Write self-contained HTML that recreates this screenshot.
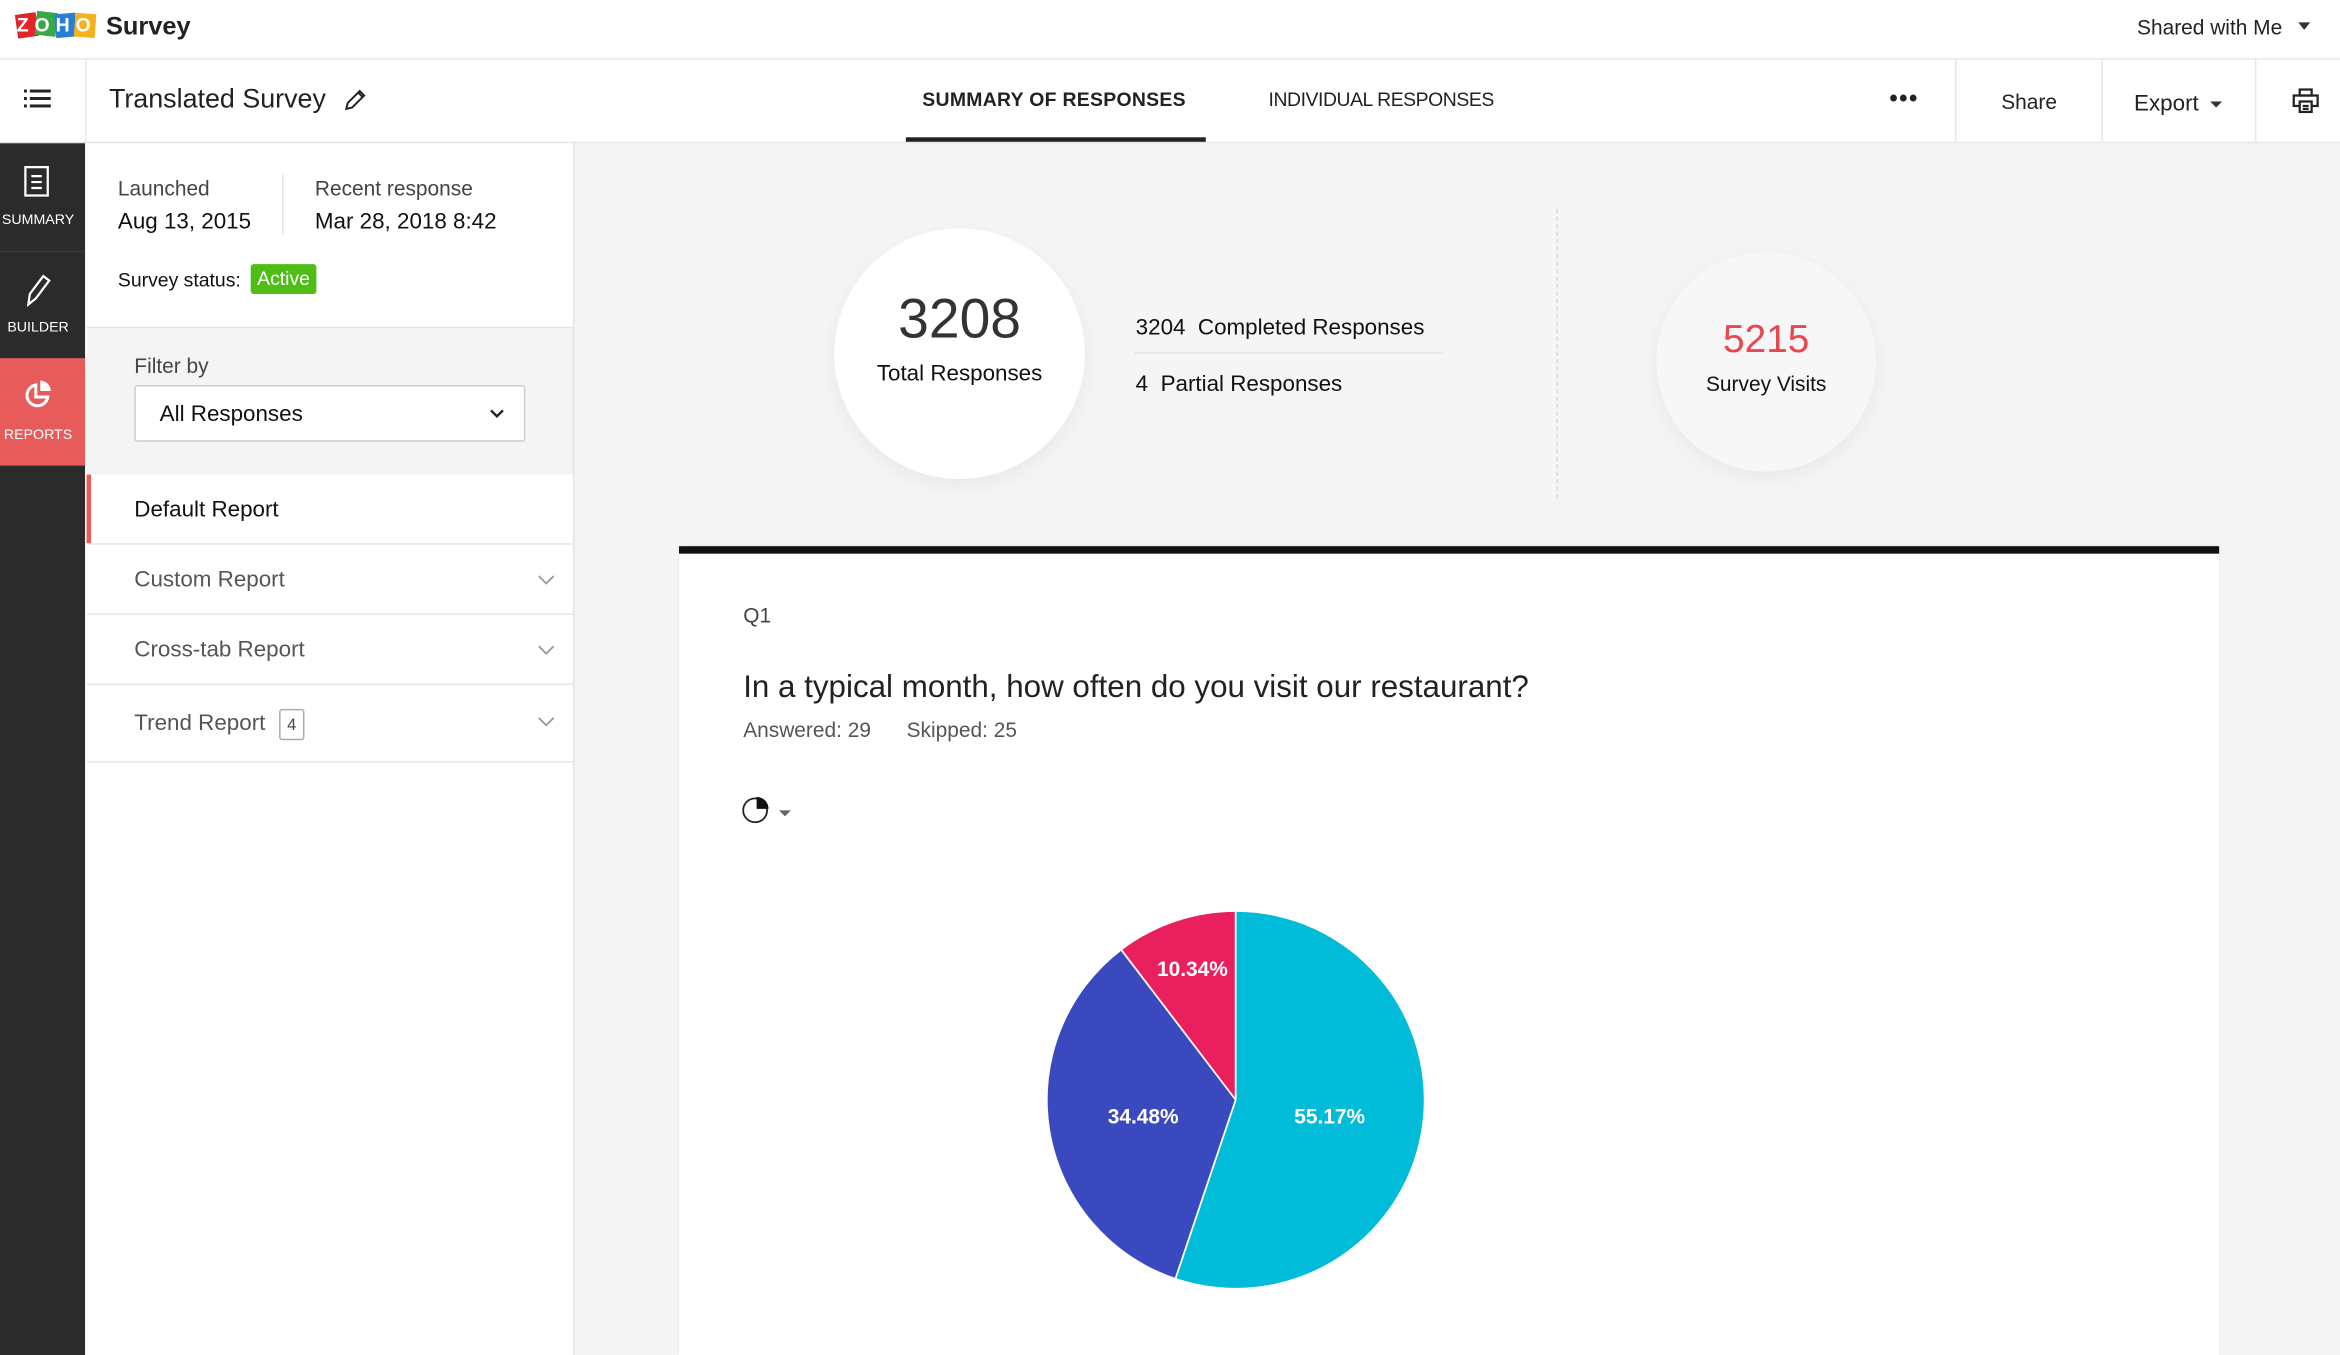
<!DOCTYPE html>
<html><head><meta charset="utf-8"><style>
*{box-sizing:border-box;margin:0;padding:0}
html,body{width:2340px;height:1355px;overflow:hidden;background:#fff}
#w{width:1568px;height:908px;transform:scale(1.49235);transform-origin:0 0;position:relative;font-family:"Liberation Sans",sans-serif;color:#222}
.a{position:absolute}
.t{white-space:nowrap}
</style></head><body><div id="w">
<div class="a" style="left:0;top:0;width:1568px;height:40px;background:#fff;border-bottom:1px solid #e6e6e6"></div>
<div class="a" style="left:11px;top:9px;width:14px;height:16px;background:#e42527;transform:rotate(-8deg)"></div>
<div class="a" style="left:24px;top:8px;width:14px;height:16px;background:#3aa844;transform:rotate(6deg)"></div>
<div class="a" style="left:37px;top:9px;width:14px;height:16px;background:#2a7fd4;transform:rotate(-5deg)"></div>
<div class="a" style="left:50px;top:9px;width:14px;height:16px;background:#f6b21a;transform:rotate(4deg)"></div>
<div class="a t" style="left:11px;top:9px;width:54px;font:bold 13px 'Liberation Sans';color:#fff;letter-spacing:4px;text-align:center;line-height:16px">ZOHO</div>
<div class="a t" style="left:71px;top:8px;font:bold 17px 'Liberation Sans';color:#222">Survey</div>
<div class="a t" style="left:1432px;top:10px;font-size:14px;color:#222">Shared with Me</div>
<div class="a" style="left:1540px;top:15px;border:4px solid transparent;border-top:5px solid #333"></div>
<div class="a" style="left:0;top:40px;width:1568px;height:56px;background:#fff;border-bottom:1px solid #e3e3e3"></div>
<div class="a" style="left:57px;top:40px;width:1px;height:56px;background:#e6e6e6"></div>
<svg class="a" style="left:16px;top:59px" width="20" height="16"><g fill="#222"><rect x="0" y="1" width="2" height="2"/><rect x="4" y="1" width="14" height="2"/><rect x="0" y="6" width="2" height="2"/><rect x="4" y="6" width="14" height="2"/><rect x="0" y="11" width="2" height="2"/><rect x="4" y="11" width="14" height="2"/></g></svg>
<div class="a t" style="left:73px;top:56px;font-size:18px;color:#222">Translated Survey</div>
<svg class="a" style="left:230px;top:59px" width="16" height="16"><path d="M2 14 L3 10 L11 2 L14 5 L6 13 Z M10 3 L13 6" fill="none" stroke="#222" stroke-width="1.3"/></svg>
<div class="a t" style="left:618px;top:59px;font:bold 13px 'Liberation Sans';color:#222;letter-spacing:0.2px">SUMMARY OF RESPONSES</div>
<div class="a" style="left:607px;top:92px;width:201px;height:3px;background:#222"></div>
<div class="a t" style="left:850px;top:59px;font-size:13px;color:#222;letter-spacing:-0.3px">INDIVIDUAL RESPONSES</div>
<div class="a t" style="left:1266px;top:58px;font:bold 16px 'Liberation Sans';letter-spacing:1px">•••</div>
<div class="a" style="left:1310px;top:40px;width:1px;height:56px;background:#e6e6e6"></div>
<div class="a t" style="left:1341px;top:60px;font-size:14px">Share</div>
<div class="a" style="left:1408px;top:40px;width:1px;height:56px;background:#e6e6e6"></div>
<div class="a t" style="left:1430px;top:61px;font-size:15px">Export</div>
<div class="a" style="left:1481px;top:68px;border:4px solid transparent;border-top:4px solid #333"></div>
<div class="a" style="left:1511px;top:40px;width:1px;height:56px;background:#e6e6e6"></div>
<svg class="a" style="left:1536px;top:59px" width="18" height="18"><g fill="none" stroke="#222" stroke-width="1.5"><rect x="5" y="1" width="8" height="4"/><rect x="1" y="5" width="16" height="7"/><rect x="5" y="9" width="8" height="7" fill="#fff"/><path d="M7 12h4M7 14h4"/></g></svg>
<div class="a" style="left:0;top:96px;width:57px;height:812px;background:#2b2b2b"></div>
<div class="a" style="left:0;top:168px;width:57px;height:1px;background:#3a3a3a"></div>
<svg class="a" style="left:16px;top:111px" width="18" height="22"><rect x="1" y="1" width="15" height="19" fill="none" stroke="#fff" stroke-width="1.5"/><path d="M5 7h7M5 11h7M5 15h7" stroke="#fff" stroke-width="1.5"/></svg>
<div class="a t" style="left:0;top:142px;width:51px;text-align:center;font-size:9.5px;color:#fff">SUMMARY</div>
<svg class="a" style="left:16px;top:182px" width="20" height="24"><path d="M3 22 L4 15 L13 3 L17 6 L8 18 Z" fill="none" stroke="#fff" stroke-width="1.5"/></svg>
<div class="a t" style="left:0;top:214px;width:51px;text-align:center;font-size:9.5px;color:#fff">BUILDER</div>
<div class="a" style="left:0;top:240px;width:57px;height:72px;background:#e85b5b"></div>
<svg class="a" style="left:16px;top:254px" width="20" height="20"><path d="M8 4 A7 7 0 1 0 16 12 L8 12 Z" fill="none" stroke="#fff" stroke-width="2"/><path d="M11 1 A7 7 0 0 1 18 8 L11 8 Z" fill="#fff"/></svg>
<div class="a t" style="left:0;top:286px;width:51px;text-align:center;font-size:9.5px;color:#fff">REPORTS</div>
<div class="a" style="left:58px;top:96px;width:326px;height:124px;background:#fff;border-bottom:1px solid #e2e2e2"></div>
<div class="a" style="left:58px;top:220px;width:326px;height:98px;background:#f4f4f4"></div>
<div class="a" style="left:58px;top:318px;width:326px;height:590px;background:#fff"></div>
<div class="a" style="left:384px;top:96px;width:1px;height:812px;background:#e2e2e2"></div>
<div class="a t" style="left:79px;top:118px;font-size:14px;color:#444">Launched</div>
<div class="a t" style="left:79px;top:140px;font-size:15px;color:#111">Aug 13, 2015</div>
<div class="a" style="left:189px;top:117px;width:1px;height:40px;background:#e2e2e2"></div>
<div class="a t" style="left:211px;top:118px;font-size:14px;color:#444">Recent response</div>
<div class="a t" style="left:211px;top:140px;font-size:15px;color:#111">Mar 28, 2018 8:42</div>
<div class="a t" style="left:79px;top:180px;font-size:13px;color:#111">Survey status:</div>
<div class="a t" style="left:168px;top:177px;width:44px;height:20px;background:#4fbd16;border-radius:2px;color:#fff;font-size:13px;text-align:center;line-height:20px">Active</div>
<div class="a t" style="left:90px;top:237px;font-size:14px;color:#444">Filter by</div>
<div class="a" style="left:90px;top:258px;width:262px;height:38px;background:#fff;border:1px solid #ccc;border-radius:2px"></div>
<div class="a t" style="left:107px;top:269px;font-size:15px;color:#111">All Responses</div>
<svg class="a" style="left:327px;top:272px" width="12" height="10"><path d="M2 3 L6 7 L10 3" fill="none" stroke="#222" stroke-width="1.6"/></svg>
<div class="a" style="left:58px;top:318px;width:3px;height:46px;background:#e85b5b"></div>
<div class="a t" style="left:90px;top:333px;font-size:15px;color:#111">Default Report</div>
<div class="a" style="left:58px;top:364px;width:326px;height:1px;background:#e6e6e6"></div>
<div class="a t" style="left:90px;top:380px;font-size:15px;color:#555">Custom Report</div>
<div class="a" style="left:58px;top:411px;width:326px;height:1px;background:#e6e6e6"></div>
<div class="a t" style="left:90px;top:427px;font-size:15px;color:#555">Cross-tab Report</div>
<div class="a" style="left:58px;top:458px;width:326px;height:1px;background:#e6e6e6"></div>
<div class="a t" style="left:90px;top:476px;font-size:15px;color:#555">Trend Report</div>
<div class="a t" style="left:187px;top:475px;width:17px;height:21px;border:1px solid #aaa;border-radius:2px;font-size:11px;text-align:center;line-height:20px;color:#444">4</div>
<div class="a" style="left:58px;top:510px;width:326px;height:1px;background:#e6e6e6"></div>
<svg class="a" style="left:360px;top:384px" width="12" height="112"><g fill="none" stroke="#999" stroke-width="1.2"><path d="M1 2 L6 7 L11 2"/><path d="M1 49 L6 54 L11 49"/><path d="M1 97 L6 102 L11 97"/></g></svg>
<div class="a" style="left:385px;top:96px;width:1183px;height:812px;background:#f5f5f5"></div>
<div class="a" style="left:559px;top:153px;width:168px;height:168px;border-radius:50%;background:#fff;box-shadow:0 4px 14px rgba(0,0,0,.06)"></div>
<div class="a t" style="left:559px;top:193px;width:168px;text-align:center;font-size:37px;color:#333">3208</div>
<div class="a t" style="left:559px;top:242px;width:168px;text-align:center;font-size:15px;color:#111">Total Responses</div>
<div class="a t" style="left:761px;top:211px;font-size:15px;color:#111">3204&nbsp; Completed Responses</div>
<div class="a" style="left:760px;top:236px;width:207px;height:1px;background:#e2e2e2"></div>
<div class="a t" style="left:761px;top:249px;font-size:15px;color:#111">4&nbsp; Partial Responses</div>
<div class="a" style="left:1043px;top:140px;width:0;height:194px;border-left:1px dashed #d8d8d8"></div>
<div class="a" style="left:1110px;top:169px;width:147px;height:147px;border-radius:50%;background:#f7f7f7;box-shadow:0 4px 14px rgba(0,0,0,.06)"></div>
<div class="a t" style="left:1110px;top:212px;width:147px;text-align:center;font-size:26px;color:#e8474f">5215</div>
<div class="a t" style="left:1110px;top:249px;width:147px;text-align:center;font-size:14px;color:#111">Survey Visits</div>
<div class="a" style="left:455px;top:366px;width:1032px;height:542px;background:#fff;border-top:5px solid #111;box-shadow:0 0 3px rgba(0,0,0,.08)"></div>
<div class="a t" style="left:498px;top:404px;font-size:14px;color:#444">Q1</div>
<div class="a t" style="left:498px;top:449px;font-size:21px;color:#222">In a typical month, how often do you visit our restaurant?</div>
<div class="a t" style="left:498px;top:481px;font-size:14px;color:#555">Answered: 29 <span style="display:inline-block;width:20px"></span>Skipped: 25</div>
<svg class="a" style="left:497px;top:533px" width="40" height="20"><circle cx="9" cy="10" r="8" fill="none" stroke="#222" stroke-width="1.2"/><path d="M10 1 A8 8 0 0 1 18 9 L10 9 Z" fill="#111"/><path d="M25 10 L33 10 L29 14 Z" fill="#666"/></svg>
<svg class="a" style="left:700px;top:609px" width="256" height="256" viewBox="700 609 256 256">
<path d="M828 737 L828 611 A126 126 0 1 1 787.8 856.4 Z" fill="#00bcd8"/>
<path d="M828 737 L787.8 856.4 A126 126 0 0 1 751.6 636.8 Z" fill="#3a49be"/>
<path d="M828 737 L751.6 636.8 A126 126 0 0 1 828 611 Z" fill="#ea1f5e"/>
<g stroke="#fff" stroke-width="1.2"><path d="M828 737 L828 611"/><path d="M828 737 L787.8 856.4"/><path d="M828 737 L751.6 636.8"/></g>
<g font-family="Liberation Sans" font-weight="bold" font-size="14" fill="#fff" text-anchor="middle"><text x="799" y="654">10.34%</text><text x="766" y="753">34.48%</text><text x="891" y="753">55.17%</text></g>
</svg>
</div></body></html>
